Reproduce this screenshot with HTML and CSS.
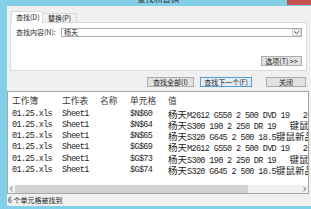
FILE: index.html
```html
<!DOCTYPE html>
<html>
<head>
<meta charset="utf-8">
<link rel="stylesheet" href="styles.css">
</head>
<body>
<div class="window">
  <div class="titlebar">
    <span class="title">查找和替换</span>
    <span class="close"></span>
  </div>
  <div class="dialog">
    <div class="tabs">
      <div class="tab active">查找(D)</div>
      <div class="tab">替换(P)</div>
    </div>
    <div class="panel">
      <div class="find-row">
        <span class="label">查找内容(N):</span>
        <div class="combo">
          <span class="combo-text">杨天</span>
          <span class="combo-btn"><svg width="7" height="5" viewBox="0 0 7 5"><path d="M1 1.2 L3.5 3.6 L6 1.2" fill="none" stroke="#444" stroke-width="1"/></svg></span>
        </div>
      </div>
      <div class="options-row">
        <button class="btn opt">选项(T) &gt;&gt;</button>
      </div>
    </div>
    <div class="actions">
      <button class="btn find-all">查找全部(I)</button>
      <button class="btn find-next">查找下一个(F)</button>
      <button class="btn close-btn">关闭</button>
    </div>
    <div class="list">
      <div class="rows">
        <div class="row head"><span>工作簿</span><span>工作表</span><span>名称</span><span>单元格</span><span>值</span></div>
        <div class="row"><span>01.25.xls</span><span>Sheet1</span><span></span><span>$N$60</span><span class="v"><span class="c">杨天</span>M2612 G550 2 500 DVD 19   26</span></div>
        <div class="row"><span>01.25.xls</span><span>Sheet1</span><span></span><span>$N$64</span><span class="v"><span class="c">杨天</span>S300 190 2 250 DR 19   <span class="c">键鼠</span></span></div>
        <div class="row"><span>01.25.xls</span><span>Sheet1</span><span></span><span>$N$65</span><span class="v"><span class="c">杨天</span>S320 G645 2 500 18.5<span class="c">键鼠新品</span></span></div>
        <div class="row"><span>01.25.xls</span><span>Sheet1</span><span></span><span>$G$69</span><span class="v"><span class="c">杨天</span>M2612 G550 2 500 DVD 19   26</span></div>
        <div class="row"><span>01.25.xls</span><span>Sheet1</span><span></span><span>$G$73</span><span class="v"><span class="c">杨天</span>S300 190 2 250 DR 19   <span class="c">键鼠</span></span></div>
        <div class="row"><span>01.25.xls</span><span>Sheet1</span><span></span><span>$G$74</span><span class="v"><span class="c">杨天</span>S320 G645 2 500 18.5<span class="c">键鼠新品</span></span></div>
      </div>
      <div class="hscroll">
        <span class="arrow"><svg width="5" height="6" viewBox="0 0 5 6"><path d="M3.5 0.8 L1.3 3 L3.5 5.2" fill="none" stroke="#606060" stroke-width="1"/></svg></span>
        <span class="thumb"></span>
        <span class="track"></span>
        <span class="arrow"><svg width="5" height="6" viewBox="0 0 5 6"><path d="M1.5 0.8 L3.7 3 L1.5 5.2" fill="none" stroke="#606060" stroke-width="1"/></svg></span>
      </div>
    </div>
    <div class="status">6 个单元格被找到</div>
  </div>
</div>
</body>
</html>
```

FILE: styles.css
```css
* {
  box-sizing: border-box;
  margin: 0;
  padding: 0;
}

html, body {
  width: 311px;
  height: 209px;
  overflow: hidden;
}

body {
  background: #83cfe7;
  font-family: "Noto Sans CJK SC", "Liberation Sans", sans-serif;
  color: #222;
}

.window {
  display: flex;
  flex-direction: column;
  height: 209px;
}

.titlebar {
  display: flex;
  height: 6px;
  overflow: hidden;
  flex: none;
}

.title {
  margin-left: 137px;
  margin-top: -6px;
  font-size: 8.5px;
  line-height: 8px;
  height: 8px;
  color: #3a3a3a;
  white-space: nowrap;
}

.close {
  margin-left: auto;
  width: 24px;
  height: 5px;
  background: #c75050;
}

.dialog {
  flex: none;
  margin-left: 7px;
  width: 304px;
  height: 200px;
  background: #f0f0f0;
  display: flex;
  flex-direction: column;
}

.tabs {
  display: flex;
  align-items: flex-end;
  height: 11px;
  margin: 5px 0 0 4px;
}

.tab {
  font-size: 7px;
  line-height: 8px;
  height: 9px;
  padding: 0 0 0 4px;
  border: 1px solid #d9d9d9;
  border-bottom: none;
  background: #f0f0f0;
  color: #222;
  white-space: nowrap;
}

.tab.active {
  position: relative;
  z-index: 1;
  width: 32px;
  height: 12px;
  margin-bottom: -1px;
  background: #fff;
  line-height: 10px;
}

.tab:not(.active) {
  width: 34px;
  border-left: none;
  padding-left: 5px;
}

.panel {
  margin-left: 3px;
  width: 297px;
  height: 49px;
  border: 1px solid #d9d9d9;
  background: #fff;
  padding: 5px 4px 0 5px;
  display: flex;
  flex-direction: column;
}

.find-row {
  display: flex;
  align-items: center;
  height: 9px;
}

.label {
  width: 45px;
  font-size: 7px;
  line-height: 9px;
  white-space: nowrap;
}

.combo {
  display: flex;
  align-items: center;
  width: 241px;
  height: 9px;
  border: 1px solid #abadb3;
  background: #fff;
}

.combo-text {
  font-size: 7px;
  line-height: 7px;
  padding-left: 2px;
}

.combo-btn {
  margin-left: auto;
  width: 9px;
  height: 7px;
  border: 1px solid #d4d4d4;
  background: #f6f6f6;
  display: flex;
  align-items: center;
  justify-content: center;
}

.options-row {
  display: flex;
  justify-content: flex-end;
  margin-top: 19px;
}

.btn {
  font-family: "Noto Sans CJK SC", "Liberation Sans", sans-serif;
  font-size: 7px;
  line-height: 1;
  height: 10px;
  border: 1px solid #adadad;
  background: #e1e1e1;
  color: #222;
  display: flex;
  align-items: center;
  justify-content: center;
  white-space: nowrap;
}

.opt {
  width: 41px;
}

.actions {
  display: flex;
  justify-content: flex-end;
  margin-top: 6px;
  padding-right: 5px;
  height: 10px;
}

.find-all {
  width: 47px;
}

.find-next {
  width: 52px;
  margin-left: 6px;
  border-color: #4f9ede;
  background: #e5eef7;
}

.close-btn {
  width: 40px;
  margin-left: 14px;
}

.list {
  margin-top: 4px;
  width: 302px;
  height: 103px;
  border: 1px solid #a6a6a6;
  background: #fff;
  display: flex;
  flex-direction: column;
}

.rows {
  flex: 1;
  overflow: hidden;
}

.row {
  display: grid;
  grid-template-columns: 50px 38px 30px 38px minmax(0, 1fr);
  padding-left: 4px;
  height: 11.3px;
  line-height: 11.3px;
  font-family: "Liberation Mono", "Noto Sans CJK SC", monospace;
  font-size: 8.5px;
  letter-spacing: -0.65px;
  color: #1e1e1e;
  white-space: pre;
  overflow: hidden;
}

.row > span {
  overflow: hidden;
  white-space: pre;
}

.row .c {
  font-family: "Noto Sans CJK SC", sans-serif;
  font-size: 9.5px;
  letter-spacing: 0;
  line-height: 11.3px;
}

.row.head {
  height: 16.5px;
  padding-top: 3px;
  line-height: 12px;
  font-family: "Noto Sans CJK SC", sans-serif;
  font-size: 8.7px;
  letter-spacing: 0;
  color: #3c3c3c;
}

.hscroll {
  display: flex;
  align-items: center;
  height: 8px;
  background: #f0f0f0;
  flex: none;
}

.arrow {
  width: 7px;
  height: 8px;
  display: flex;
  align-items: center;
  justify-content: center;
}

.thumb {
  width: 233px;
  height: 8px;
  background: #d2d2d2;
}

.track {
  flex: 1;
}

.status {
  height: 12px;
  font-size: 7px;
  line-height: 12px;
  padding-left: 1px;
  color: #222;
  white-space: nowrap;
}
```
